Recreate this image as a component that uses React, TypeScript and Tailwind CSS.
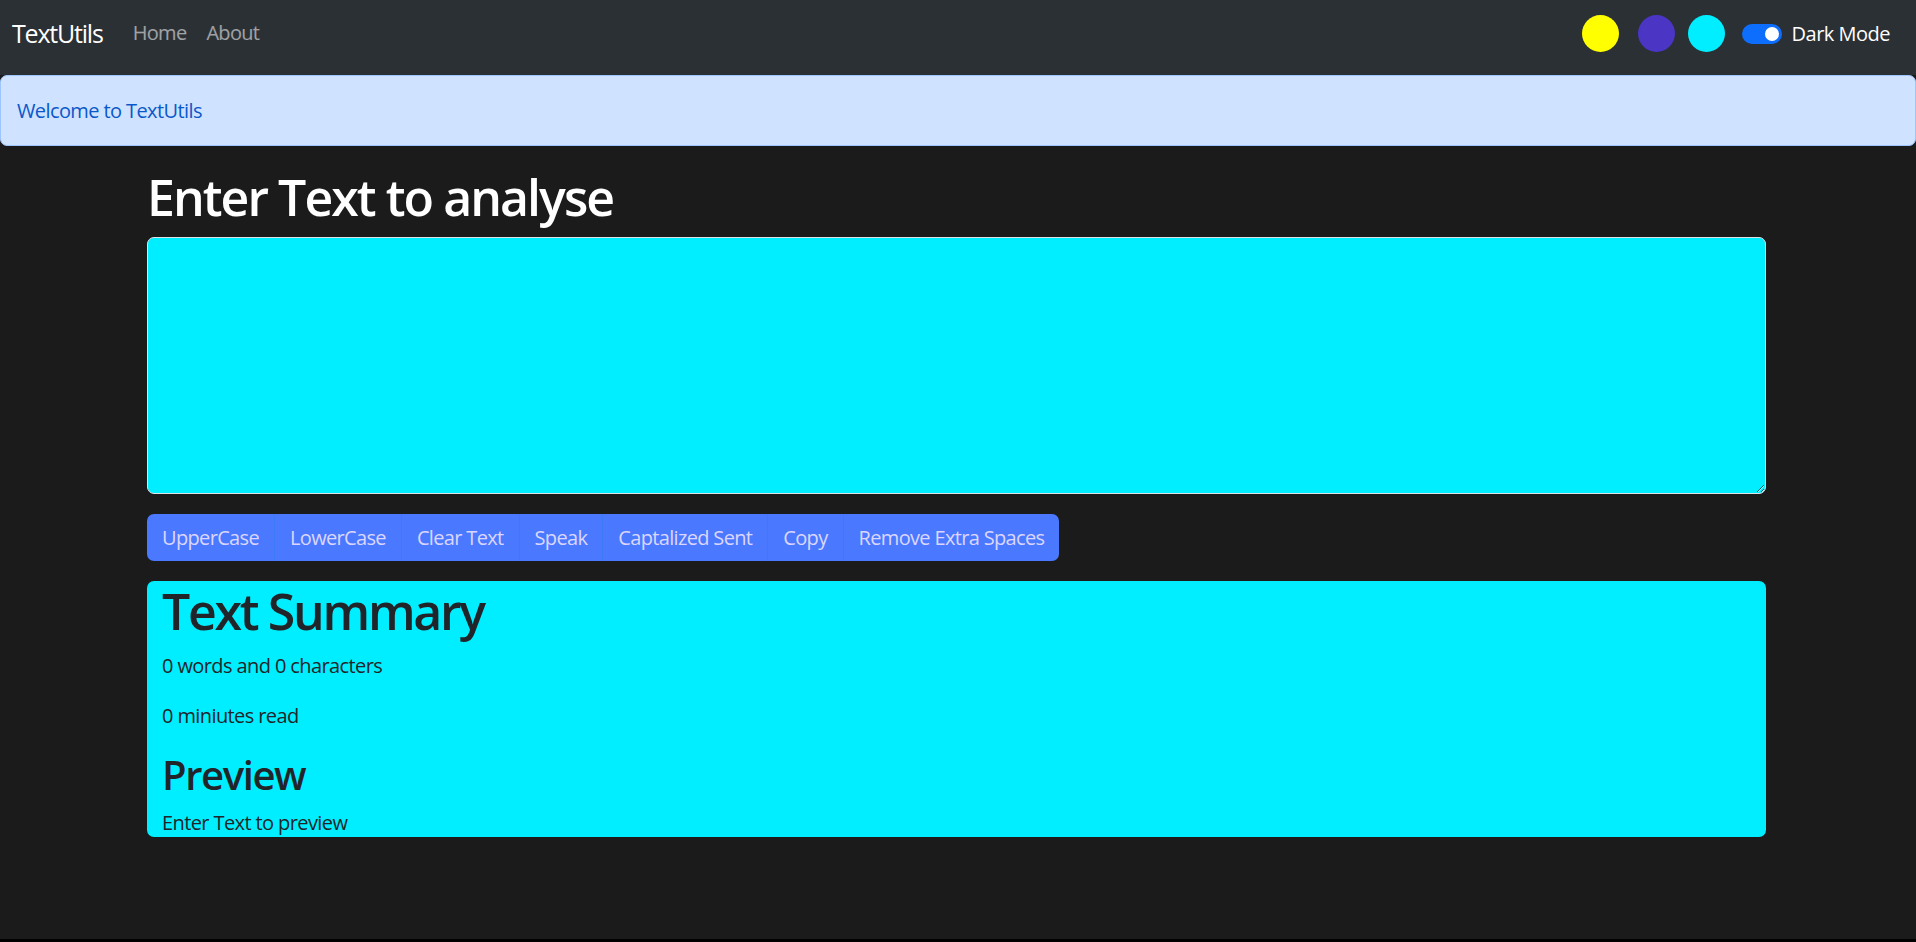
import React, { useState } from 'react';

const buttons = ['UpperCase', 'LowerCase', 'Clear Text', 'Speak', 'Captalized Sent', 'Copy', 'Remove Extra Spaces'];

export default function App() {
  const [text, setText] = useState('');

  return (
    <div className="flex h-[942px] flex-col bg-black font-['Open_Sans',Arial,sans-serif]">
      <div className="h-[939px] overflow-hidden bg-[#1b1b1b] text-white">
        {/* Navbar */}
        <nav className="flex h-[75px] items-center bg-[#2b3035] pl-[12px] pr-[26px]">
          <a className="mb-[9px] mr-[20px] text-[25px] leading-[37px] tracking-[-1.2px] text-white">TextUtils</a>
          <a className="mb-[9px] px-[10px] text-[20px] tracking-[-0.7px] text-white/55">Home</a>
          <a className="mb-[9px] px-[10px] text-[20px] tracking-[-0.7px] text-white/55">About</a>
          <div className="ml-auto flex items-center self-start pt-[15px]">
            <div className="h-[37px] w-[37px] rounded-full bg-[#ffff00]" />
            <div className="ml-[19px] h-[37px] w-[37px] rounded-full bg-[#4a35c4]" />
            <div className="ml-[13px] h-[37px] w-[37px] rounded-full bg-[#00eeff]" />
            <div className="ml-[17px] flex h-[20px] w-[40px] items-center justify-end rounded-full bg-[#0d6efd] pr-[3px]">
              <div className="h-[14px] w-[14px] rounded-full bg-white" />
            </div>
            <span className="ml-[10px] text-[20px] tracking-[-0.5px] text-white">Dark Mode</span>
          </div>
        </nav>

        {/* Alert */}
        <div className="flex h-[71px] items-center rounded-[7px] border border-[#9ec5fe] bg-[#cfe2ff] px-[16px] text-[20px] tracking-[-0.6px] text-[#0a58ca]">
          Welcome to TextUtils
        </div>

        {/* Form */}
        <div className="ml-[132px] mt-[21px] w-[1649px] px-[15px]">
          <h1 className="mb-[10px] text-[50px] font-semibold leading-[60px] tracking-[-1.95px] text-white">Enter Text to analyse</h1>
          <textarea
            value={text}
            onChange={(e) => setText(e.target.value)}
            rows={8}
            className="block h-[257px] w-full rounded-[7px] border border-[#dee2e6] bg-[#00eeff] px-[15px] py-[7px] text-[20px] text-[#212529] outline-none"
          />
          <div className="mt-[20px] inline-flex overflow-hidden rounded-[7px]">
            {buttons.map((b, i) => (
              <button
                key={b}
                className={`h-[47px] bg-[#4a79ff] px-[15px] text-[20px] tracking-[-0.66px] text-[#dcd6ff] ${i > 0 ? 'border-l border-[#3b7bf6]' : ''}`}
              >
                {b}
              </button>
            ))}
          </div>

          {/* Summary */}
          <div className="mt-[20px] h-[256px] rounded-[7px] bg-[#00eeff] px-[15px] text-[#212529]">
            <h1 className="mb-[10px] text-[50px] font-semibold leading-[60px] tracking-[-2.3px]">Text Summary</h1>
            <p className="mb-[20px] text-[20px] leading-[30px] tracking-[-0.6px]">0 words and 0 characters</p>
            <p className="mb-[20px] text-[20px] leading-[30px] tracking-[-0.6px]">0 miniutes read</p>
            <h2 className="mb-[10px] mt-[2px] text-[40px] font-semibold leading-[48px] tracking-[-1.4px]">Preview</h2>
            <p className="text-[20px] leading-[28px] tracking-[-0.6px]">Enter Text to preview</p>
          </div>
        </div>
      </div>
    </div>
  );
}
